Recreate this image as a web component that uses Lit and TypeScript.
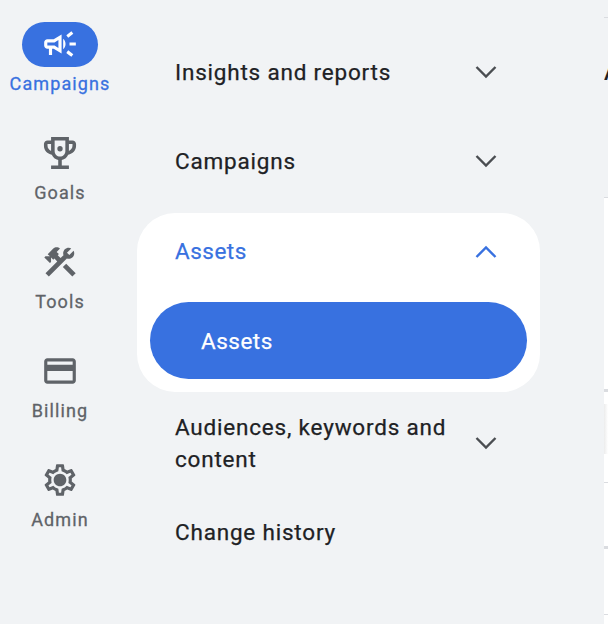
import { LitElement, html, css, svg } from 'lit';
import { customElement } from 'lit/decorators.js';

const ICONS = {
  campaign: svg`<path d="M18 11v2h4v-2h-4zm-2 6.61c.96.71 2.21 1.65 3.2 2.39.4-.53.8-1.07 1.2-1.6-.99-.74-2.24-1.68-3.2-2.4-.4.54-.8 1.08-1.2 1.61zM20.4 5.6c-.4-.53-.8-1.07-1.2-1.6-.99.74-2.24 1.68-3.2 2.4.4.53.8 1.07 1.2 1.6.96-.72 2.21-1.65 3.2-2.4zM4 9c-1.1 0-2 .9-2 2v2c0 1.1.9 2 2 2h1v4h2v-4h1l5 3V6L8 9H4zm5.03 1.71L11 9.53v4.94l-1.97-1.18-.48-.29H4v-2h4.55l.48-.29zM15.5 12c0-1.33-.58-2.53-1.5-3.35v6.69c.92-.81 1.5-2.01 1.5-3.34z"/>`,
  trophy: svg`<path d="M19 5h-2V3H7v2H5c-1.1 0-2 .9-2 2v1c0 2.55 1.92 4.63 4.39 4.94.63 1.5 1.98 2.63 3.61 2.96V19H7v2h10v-2h-4v-3.1c1.63-.33 2.98-1.46 3.61-2.96C19.08 12.63 21 10.55 21 8V7c0-1.1-.9-2-2-2zM5 8V7h2v3.82C5.84 10.4 5 9.3 5 8zm7 6c-1.65 0-3-1.35-3-3V5h6v6c0 1.65-1.35 3-3 3zm7-6c0 1.3-.84 2.4-2 2.82V7h2v1z"/><circle cx="12" cy="9.6" r="1.5"/>`,
  tools: svg`<path d="M13.783 15.172l2.121-2.121 5.996 5.996-2.121 2.121z"/><path d="M17.5 10c1.93 0 3.5-1.57 3.5-3.5 0-.58-.16-1.12-.41-1.6l-2.7 2.7-1.49-1.49 2.7-2.7c-.48-.25-1.02-.41-1.6-.41C15.57 3 14 4.57 14 6.5c0 .41.08.8.21 1.16l-1.85 1.85-1.78-1.78.71-.71-1.41-1.41L12 3.49c-1.17-1.17-3.07-1.17-4.24 0L4.22 7.03l1.41 1.41H2.81l-.71.71 3.54 3.54.71-.71V9.15l1.41 1.41.71-.71 1.78 1.78-7.41 7.41 2.12 2.12L16.34 9.79c.36.13.75.21 1.16.21z"/>`,
  card: svg`<path d="M20 4H4c-1.11 0-1.99.89-1.99 2L2 18c0 1.11.89 2 2 2h16c1.11 0 2-.89 2-2V6c0-1.11-.89-2-2-2zm0 14H4v-6h16v6zm0-10H4V6h16v2z"/>`,
  gear: svg`<path d="M19.43 12.98c.04-.32.07-.64.07-.98 0-.34-.03-.66-.07-.98l2.11-1.65c.19-.15.24-.42.12-.64l-2-3.46c-.09-.16-.26-.25-.44-.25-.06 0-.12.01-.17.03l-2.49 1c-.52-.4-1.08-.73-1.69-.98l-.38-2.65C14.46 2.18 14.25 2 14 2h-4c-.25 0-.46.18-.49.42l-.38 2.65c-.61.25-1.17.59-1.69.98l-2.49-1c-.06-.02-.12-.03-.18-.03-.17 0-.34.09-.43.25l-2 3.46c-.13.22-.07.49.12.64l2.11 1.65c-.04.32-.07.65-.07.98 0 .33.03.66.07.98l-2.11 1.65c-.19.15-.24.42-.12.64l2 3.46c.09.16.26.25.44.25.06 0 .12-.01.17-.03l2.49-1c.52.4 1.08.73 1.69.98l.38 2.65c.03.24.24.42.49.42h4c.25 0 .46-.18.49-.42l.38-2.65c.61-.25 1.17-.59 1.69-.98l2.49 1c.06.02.12.03.18.03.17 0 .34-.09.43-.25l2-3.46c.12-.22.07-.49-.12-.64l-2.11-1.65zm-1.98-1.71c.04.31.05.52.05.73 0 .21-.02.43-.05.73l-.14 1.13.89.7 1.08.84-.7 1.21-1.27-.51-1.04-.42-.9.68c-.43.32-.84.56-1.25.73l-1.06.43-.16 1.13-.2 1.35h-1.4l-.19-1.35-.16-1.13-1.06-.43c-.43-.18-.83-.41-1.23-.71l-.91-.7-1.06.43-1.27.51-.7-1.21 1.08-.84.89-.7-.14-1.13c-.03-.31-.05-.54-.05-.74s.02-.43.05-.73l.14-1.13-.89-.7-1.08-.84.7-1.21 1.27.51 1.04.42.9-.68c.43-.32.84-.56 1.25-.73l1.06-.43.16-1.13.2-1.35h1.39l.19 1.35.16 1.13 1.06.43c.43.18.83.41 1.23.71l.91.7 1.06-.43 1.27-.51.7 1.21-1.07.85-.89.7.14 1.13zM12 8c-2.21 0-4 1.79-4 4s1.79 4 4 4 4-1.79 4-4-1.79-4-4-4z"/>`,
};

const RAIL = [
  { icon: ICONS.campaign, label: 'Campaigns', active: true, box: '0 0 24 24' },
  { icon: ICONS.trophy, label: 'Goals', active: false, box: '1.35 1.35 21.3 21.3' },
  { icon: ICONS.tools, label: 'Tools', active: false, box: '0 0 24 24' },
  { icon: ICONS.card, label: 'Billing', active: false, box: '0 0 24 24' },
  { icon: ICONS.gear, label: 'Admin', active: false, box: '0 0 24 24' },
];

@customElement('app-root')
export class AppRoot extends LitElement {
  static styles = css`
    :host {
      display: block;
      width: 608px;
      height: 624px;
      overflow: hidden;
      background: #f1f3f5;
      font-family: Roboto, "Liberation Sans", sans-serif;
    }

    .page {
      display: flex;
      height: 624px;
    }

    .rail {
      flex: none;
      width: 120px;
      padding-top: 22px;
      box-sizing: border-box;
    }
    .rail-item {
      height: 109px;
      display: flex;
      flex-direction: column;
      align-items: center;
      color: #5f6368;
    }
    .rail-item.active {
      color: #3871e0;
    }
    .rail-icon {
      width: 76px;
      height: 45px;
      box-sizing: border-box;
      padding-bottom: 1px;
      border-radius: 23px;
      display: flex;
      align-items: center;
      justify-content: center;
    }
    .rail-item.active .rail-icon {
      background: #3871e0;
      color: #fff;
    }
    .rail-icon svg {
      width: 38px;
      height: 38px;
      fill: currentColor;
    }
    .rail-label {
      margin-top: 6px;
      font-size: 18px;
      line-height: 22px;
      font-weight: 400;
      letter-spacing: 1.1px;
      -webkit-text-stroke: 0.3px currentColor;
      white-space: nowrap;
    }

    .menu {
      flex: none;
      width: 403px;
      margin-left: 17px;
      padding-top: 33px;
      display: flex;
      flex-direction: column;
      gap: 13px;
      box-sizing: border-box;
      font-size: 22.5px;
      line-height: 32px;
      font-weight: 400;
      letter-spacing: 0.8px;
      -webkit-text-stroke: 0.25px currentColor;
      color: #202124;
    }
    .row {
      height: 77px;
      display: flex;
      align-items: center;
      justify-content: space-between;
      padding: 0 42px 0 38px;
      box-sizing: border-box;
    }
    .row.first {
      padding-top: 2px;
    }
    .row.lift span {
      margin-bottom: 2px;
    }
    .row svg {
      flex: none;
      width: 24px;
      height: 15px;
      fill: none;
      stroke: #4a4d51;
      stroke-width: 2.4;
    }
    .row.wrap span {
      width: 290px;
      padding-bottom: 2px;
    }
    .row.end {
      margin-top: -1px;
    }
    .group {
      background: #fff;
      border-radius: 38px;
      padding-bottom: 13px;
      letter-spacing: 0.5px;
    }
    .group .row {
      height: 76px;
      color: #3871e0;
    }
    .group .row svg {
      stroke: #3871e0;
    }
    .sub {
      height: 77px;
      margin: 13px 13px 0;
      padding: 1px 0 0 51px;
      box-sizing: border-box;
      border-radius: 39px;
      background: #3871e0;
      color: #fff;
      display: flex;
      align-items: center;
    }

    .pane {
      flex: none;
      width: 64px;
      margin-left: 64px;
      overflow: hidden;
    }
    .pane-top {
      height: 198px;
      box-sizing: border-box;
      border-bottom: 1px solid #dadce0;
      padding-top: 17px;
    }
    .pane-line {
      height: 1px;
      background: #dadce0;
    }
    .pane-title {
      margin-top: 42px;
      font-size: 22px;
      line-height: 26px;
      font-weight: 500;
      color: #202124;
      white-space: nowrap;
    }
    .pane-rows {
      background: #fff;
      height: 426px;
    }
    .cell {
      box-sizing: border-box;
      border-bottom: 1px solid #dadce0;
    }
    .cell.first { height: 194px; border-bottom-width: 3px; }
    .cell.fade {
      height: 91px;
      background: linear-gradient(90deg, #ececec, #fff);
      background-size: 4px 50px;
      background-position: 0 12px;
      background-repeat: no-repeat;
    }
    .cell.mid { height: 66px; border-bottom-width: 3px; }
    .cell.last { height: 66px; }
  `;

  chevron(up = false) {
    return html`<svg viewBox="0 0 24 15">
      <polyline points=${up ? '2.5,13 12,3.5 21.5,13' : '2.5,2 12,11.5 21.5,2'}></polyline>
    </svg>`;
  }

  render() {
    return html`
      <div class="page">
        <nav class="rail">
          ${RAIL.map(
            (item) => html`
              <div class="rail-item ${item.active ? 'active' : ''}">
                <div class="rail-icon">
                  <svg viewBox=${item.box}>${item.icon}</svg>
                </div>
                <div class="rail-label">${item.label}</div>
              </div>
            `
          )}
        </nav>

        <div class="menu">
          <div class="row first lift"><span>Insights and reports</span>${this.chevron()}</div>
          <div class="row lift"><span>Campaigns</span>${this.chevron()}</div>
          <div class="group">
            <div class="row"><span>Assets</span>${this.chevron(true)}</div>
            <div class="sub">Assets</div>
          </div>
          <div class="row wrap"><span>Audiences, keywords and content</span>${this.chevron()}</div>
          <div class="row end lift"><span>Change history</span></div>
        </div>

        <div class="pane">
          <div class="pane-top">
            <div class="pane-line"></div>
            <div class="pane-title">Assets</div>
          </div>
          <div class="pane-rows">
            <div class="cell first"></div>
            <div class="cell fade"></div>
            <div class="cell mid"></div>
            <div class="cell last"></div>
          </div>
        </div>
      </div>
    `;
  }
}
